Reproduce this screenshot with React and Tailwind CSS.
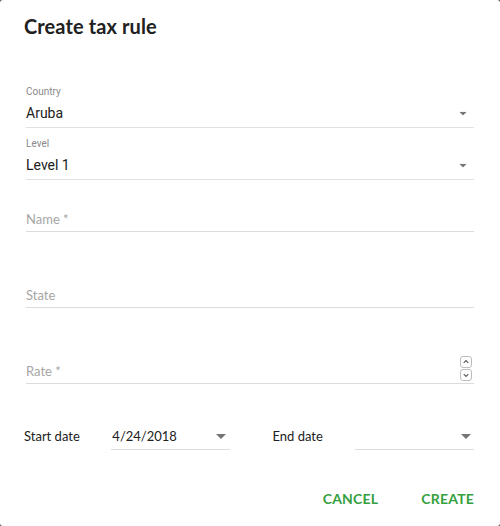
import React from 'react';

const Caret = ({ className = '' }) => (
  <svg width="10" height="5" viewBox="0 0 10 5" className={className}>
    <path d="M0 0 L10 0 L5 5 Z" fill="#757575" />
  </svg>
);

function SelectField({ label, value }) {
  return (
    <div className="h-[52px] flex flex-col justify-end border-b border-[#e0e0e0]">
      <span className="text-[10px] leading-[16px] text-[#8a8a8a] font-['Roboto',sans-serif]">{label}</span>
      <div className="flex items-center justify-between h-[27px]">
        <span className="text-[14px] text-[#212121] font-['Roboto',sans-serif]">{value}</span>
        <Caret className="mr-[6px] scale-75" />
      </div>
    </div>
  );
}

function TextField({ placeholder, spinner }) {
  return (
    <div className="relative flex items-end h-[24px] pb-[2px] border-b border-[#dcdcdc]">
      <span className="text-[13px] text-[#a6a6a6] font-['Lato',sans-serif]">{placeholder}</span>
      {spinner && (
        <div className="absolute right-[2px] -top-[4px] flex flex-col gap-[1px]">
          {['M3 6 L5.5 3.5 L8 6', 'M3 4 L5.5 6.5 L8 4'].map((d) => (
            <div key={d} className="w-[12px] h-[12px] rounded-[3px] border border-[#bdbdbd] flex items-center justify-center">
              <svg width="11" height="10" viewBox="0 0 11 10">
                <path d={d} fill="none" stroke="#555" strokeWidth="1.2" />
              </svg>
            </div>
          ))}
        </div>
      )}
    </div>
  );
}

export default function App() {
  return (
    <div className="w-[500px] h-[526px] bg-[#555]">
      <div className="w-full h-full bg-white rounded-[3px] px-[26px] pt-[13px] font-['Lato',sans-serif]">
        <h1 className="-ml-[2px] text-[20px] font-bold text-[#212121] leading-[26px] tracking-[0.1px]">Create tax rule</h1>

        <div className="mt-[37px]">
          <SelectField label="Country" value="Aruba" />
          <SelectField label="Level" value="Level 1" />
        </div>

        <div className="mt-[28px]">
          <TextField placeholder="Name *" />
        </div>
        <div className="mt-[52px]">
          <TextField placeholder="State" />
        </div>
        <div className="mt-[52px]">
          <TextField placeholder="Rate *" spinner />
        </div>

        <div className="mt-[40px] flex items-start -ml-[2px] text-[13px] text-[#212121]">
          <span className="w-[88px] h-[26px] flex items-center">Start date</span>
          <div className="w-[120px] h-[26px] flex items-center justify-between border-b border-[#dcdcdc]">
            <span className="pl-[1px]">4/24/2018</span>
            <Caret className="mr-[4px]" />
          </div>
          <span className="ml-[42px] w-[83px] h-[26px] flex items-center">End date</span>
          <div className="w-[120px] h-[26px] flex items-center justify-end border-b border-[#dcdcdc]">
            <Caret className="mr-[3px]" />
          </div>
        </div>

        <div className="mt-[38px] flex justify-end gap-[43px] text-[14px] font-bold text-[#36a03f] tracking-[0.2px]">
          <button>CANCEL</button>
          <button>CREATE</button>
        </div>
      </div>
    </div>
  );
}
